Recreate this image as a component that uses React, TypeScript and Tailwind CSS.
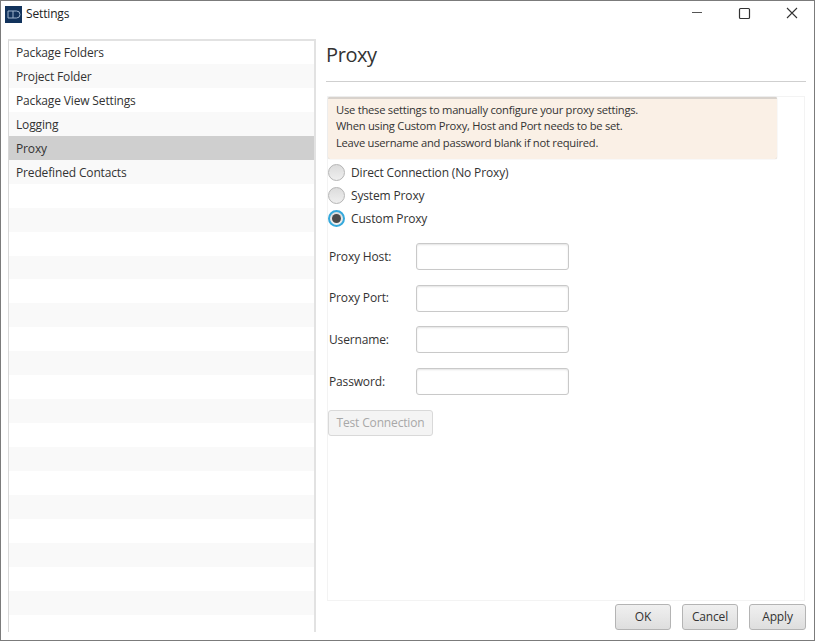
import React from "react";

const items = ["Package Folders", "Project Folder", "Package View Settings", "Logging", "Proxy", "Predefined Contacts"];
const rows = Array.from({ length: 25 }, (_, i) => items[i] ?? "");
const fields = ["Proxy Host:", "Proxy Port:", "Username:", "Password:"];

const Radio = ({ label, checked }: { label: string; checked?: boolean }) => (
  <div className="flex h-[23px] items-center gap-[6px]">
    <span
      className={
        "flex h-[17px] w-[17px] items-center justify-center rounded-full bg-gradient-to-b from-[#dcdcdc] to-[#efefef] " +
        (checked ? "border-2 border-[#35a9dc]" : "border border-[#b5b5b5]")
      }
    >
      {checked && <span className="h-[9px] w-[9px] rounded-full bg-[#4a4a4a]" />}
    </span>
    <span>{label}</span>
  </div>
);

const FooterButton = ({ label, w }: { label: string; w: string }) => (
  <button className={"h-[26px] rounded-[3px] border border-[#b4b4b4] bg-gradient-to-b from-[#f0f0f0] to-[#dedede] text-[#333] " + w}>
    {label}
  </button>
);

const App = () => {
  return (
    <div className="flex h-[641px] w-[815px] flex-col overflow-hidden border border-[#7b7b7b] bg-white font-['Open_Sans',sans-serif] text-[12px] tracking-[-0.15px] text-[#333]">
      {/* Title bar */}
      <div className="flex h-[26px] shrink-0 items-center pl-[4px]">
        <svg width="17" height="17" viewBox="0 0 17 17" className="mr-[4px]">
          <rect width="17" height="17" fill="#12335c" />
          <path d="M3 5h5v7H3zM8 5h3.5a3.5 3.5 0 0 1 0 7H8" fill="none" stroke="#9db4cc" strokeWidth="1" />
        </svg>
        <span className="text-[#222]">Settings</span>
        <div className="ml-auto flex items-center text-[#333]">
          <svg width="48" height="26" viewBox="0 0 48 26">
            <path d="M22 11.5h10" stroke="#555" strokeWidth="1" />
          </svg>
          <svg width="48" height="26" viewBox="0 0 48 26">
            <rect x="21.5" y="7.5" width="10" height="10" rx="1" fill="none" stroke="#333" strokeWidth="1.2" />
          </svg>
          <svg width="48" height="26" viewBox="0 0 48 26">
            <path d="M21 7l10 10M31 7L21 17" stroke="#333" strokeWidth="1.1" />
          </svg>
        </div>
      </div>

      <div className="flex min-h-0 flex-1 pl-[7px] pr-[8px] pt-[12px]">
        {/* Sidebar list */}
        <div className="h-[593px] w-[308px] shrink-0 overflow-hidden border-l border-r-2 border-t-2 border-l-[#d8d8d8] border-r-[#e2e2e2] border-t-[#e2e2e2]">
          {rows.map((label, i) => (
            <div
              key={i}
              className={
                "flex items-center pl-[7px] " +
                (i === 0 ? "h-[23px] " : "h-[23.95px] pt-[2px] ") +
                (label === "Proxy" ? "bg-[#cfcfcf]" : i % 2 === 1 ? "bg-[#f9f9f9]" : "bg-white")
              }
            >
              {label}
            </div>
          ))}
        </div>

        {/* Right panel */}
        <div className="ml-[10px] flex min-w-0 flex-1 flex-col">
          <h1 className="mb-[12px] mt-[2px] h-[28px] text-[20px] leading-[28px] tracking-[-0.4px] text-[#333]">Proxy</h1>
          <div className="h-px w-full bg-[#cfcfcf]" />
          <div className="ml-px mr-px mt-[14px] h-[505px] border border-[#f3f3f3]">
            <div className="h-[62px] w-[449px] rounded-[2px] border-t-2 border-t-[#d8d2cc] bg-[#faf0e6] pl-[8px] pt-[3px] text-[11.2px] leading-[16.3px] tracking-[-0.25px] shadow-[0_0_1px_#bbb]">
              <p>Use these settings to manually configure your proxy settings.</p>
              <p>When using Custom Proxy, Host and Port needs to be set.</p>
              <p>Leave username and password blank if not required.</p>
            </div>
            <div className="mt-[2px] flex flex-col">
              <Radio label="Direct Connection (No Proxy)" />
              <Radio label="System Proxy" />
              <Radio label="Custom Proxy" checked />
            </div>
            <div className="mt-[13px] flex flex-col gap-[14.7px]">
              {fields.map((f) => (
                <div key={f} className="flex items-center">
                  <label className="w-[88px] pl-px">{f}</label>
                  <input className="h-[27px] w-[153px] rounded-[3px] border border-[#c9c9c9] shadow-[inset_0_1px_2px_#e3e3e3]" />
                </div>
              ))}
            </div>
            <button className="mt-[15px] h-[26px] w-[105px] rounded-[3px] border border-[#d9d9d9] bg-[#f4f4f4] text-[#a8a8a8]">
              Test Connection
            </button>
          </div>
          <div className="mt-[3px] flex justify-end gap-[11px]">
            <FooterButton label="OK" w="w-[56px]" />
            <FooterButton label="Cancel" w="w-[56px]" />
            <FooterButton label="Apply" w="w-[57px]" />
          </div>
        </div>
      </div>
    </div>
  );
};

export default App;
